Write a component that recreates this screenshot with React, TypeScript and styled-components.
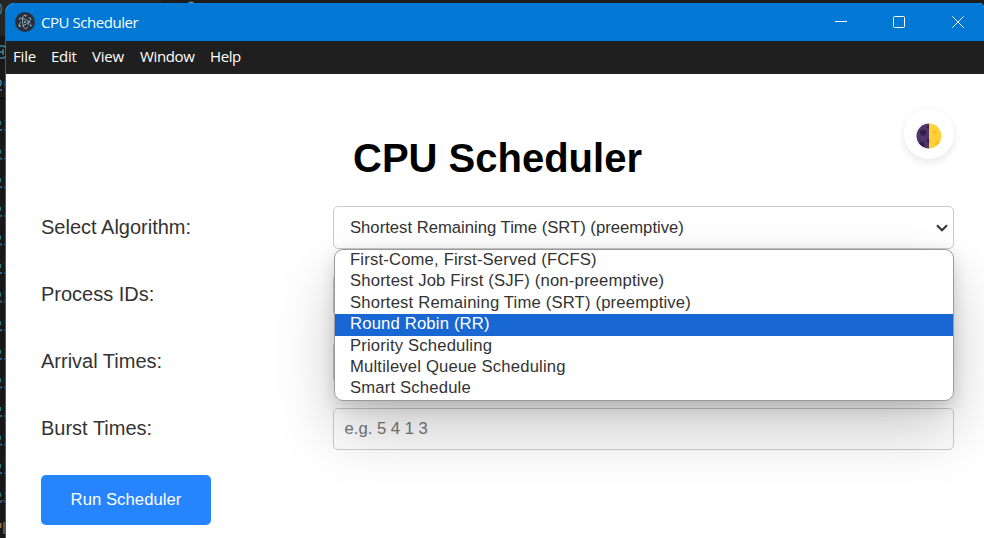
import React from "react";
import styled, { createGlobalStyle } from "styled-components";

const GlobalStyle = createGlobalStyle`
  * { box-sizing: border-box; }
  html, body { margin: 0; padding: 0; background: #171717; overflow: hidden; }
`;

const Desktop = styled.div`
  display: flex;
  width: 984px;
  height: 538px;
  overflow: hidden;
  position: relative;
  background: #1d1d1d;
  font-family: "Liberation Sans", Arial, sans-serif;
`;

const EditorBehind = styled.svg`
  position: absolute;
  left: 0;
  top: 0;
`;

const Window = styled.div`
  position: relative;
  display: flex;
  flex-direction: column;
  width: 979px;
  height: 535px;
  margin: 3px 0 0 5px;
  border-left: 1px solid #0b6cc0;
  border-radius: 9px 5px 0 0;
  overflow: hidden;
  background: #fff;
`;

const TitleBar = styled.header`
  display: flex;
  align-items: center;
  flex: none;
  height: 38px;
  padding-left: 9px;
  background: #0078d4;
  color: #fff;
  font-family: "Open Sans", sans-serif;
`;

const WindowTitle = styled.span`
  flex: 1;
  margin-left: 6px;
  font-size: 15px;
  line-height: 20px;
  letter-spacing: -0.45px;
`;

const Controls = styled.div`
  display: flex;
  margin-right: -3px;
`;

const Control = styled.div`
  display: flex;
  align-items: center;
  justify-content: center;
  width: 58.5px;
  height: 38px;
`;

const MenuBar = styled.nav`
  display: flex;
  flex: none;
  height: 33px;
  padding-left: 7px;
  background: #1f1f1f;
  color: #fff;
  font-family: "Open Sans", sans-serif;
`;

const MenuItem = styled.span<{ $width: number; $spacing: number }>`
  width: ${(p) => p.$width}px;
  font-size: 15px;
  line-height: 30px;
  letter-spacing: ${(p) => p.$spacing}px;
  white-space: nowrap;
`;

const Page = styled.main`
  position: relative;
  flex: 1;
  padding: 60px 30px 0 35px;
`;

const ThemeToggle = styled.button`
  position: absolute;
  top: 35px;
  right: 30px;
  display: flex;
  align-items: center;
  justify-content: center;
  width: 50px;
  height: 50px;
  padding: 3px 0 0;
  border: 0;
  border-radius: 50%;
  background: #fff;
  box-shadow: 0 3px 8px rgba(0, 0, 0, 0.1);
`;

const Heading = styled.h1`
  margin: 0 0 24px;
  font-size: 40px;
  line-height: 48px;
  font-weight: 700;
  text-align: center;
  color: #000;
`;

const Form = styled.div`
  display: grid;
  grid-template-columns: 292px 621px;
  grid-auto-rows: 43px;
  row-gap: 24px;
  align-items: center;
`;

const Label = styled.label`
  padding-bottom: 2px;
  font-size: 20px;
  line-height: 24px;
  color: #333;
`;

const SelectField = styled.div`
  position: relative;
  display: flex;
  align-items: center;
  justify-content: space-between;
  height: 43px;
  padding: 0 5px 0 16px;
  border: 1px solid #ccc;
  border-radius: 5px;
  background: #fff;
  color: #333;
  font-size: 16.67px;
`;

const TextField = styled.div`
  display: flex;
  align-items: center;
  height: 42px;
  padding: 1px 0 0 10.5px;
  border: 1px solid #ccc;
  border-radius: 5px;
  background: #fff;
  color: #757575;
  font-size: 16.67px;
`;

const OptionList = styled.ul`
  position: absolute;
  z-index: 2;
  top: 42px;
  left: 0;
  width: 620px;
  height: 152px;
  margin: 0;
  padding: 0;
  overflow: hidden;
  list-style: none;
  border: 1px solid #9a9a9a;
  border-radius: 9px;
  background: #fff;
`;

const OptionShadow = styled.div`
  position: absolute;
  z-index: 1;
  top: 42px;
  left: 0;
  width: 620px;
  height: 152px;
  border-radius: 9px;
  box-shadow: 0 30px 60px rgba(0, 0, 0, 0.21), 0 5px 16px rgba(0, 0, 0, 0.15);
`;

const Option = styled.li<{ $active?: boolean }>`
  height: 21.4px;
  padding-left: 15px;
  font-size: 16.67px;
  line-height: 20px;
  letter-spacing: 0.17px;
  white-space: nowrap;
  background: ${(p) => (p.$active ? "#1967d2" : "transparent")};
  color: ${(p) => (p.$active ? "#fff" : "#333")};
`;

const RunButton = styled.button`
  display: block;
  width: 170px;
  height: 50px;
  margin-top: 25px;
  padding: 0 0 1px;
  border: 0;
  border-radius: 5px;
  background: #2684ff;
  color: #fff;
  font-family: inherit;
  font-size: 16.67px;
  letter-spacing: 0.05px;
`;

const menus = [
  { name: "File", width: 38, spacing: -0.2 },
  { name: "Edit", width: 41, spacing: -0.3 },
  { name: "View", width: 48, spacing: -0.2 },
  { name: "Window", width: 70, spacing: -0.35 },
  { name: "Help", width: 40, spacing: -0.4 },
];

const options = [
  "First-Come, First-Served (FCFS)",
  "Shortest Job First (SJF) (non-preemptive)",
  "Shortest Remaining Time (SRT) (preemptive)",
  "Round Robin (RR)",
  "Priority Scheduling",
  "Multilevel Queue Scheduling",
  "Smart Schedule",
];

const codeLines = Array.from({ length: 20 }, (_, i) => 129 + i * 28.6).filter((y) => y < 505);

function CodeEdge() {
  return (
    <EditorBehind width="984" height="538" viewBox="0 0 984 538">
      <rect width="161" height="36" fill="#252525" />
      <rect y="36" width="6" height="502" fill="#181818" />
      <rect y="98" width="6" height="1" fill="#050505" />
      <path d="M0 4q3 5 0 10" fill="none" stroke="#3b788b" strokeWidth="1.5" />
      <circle cx="191" cy="5" r="3.500" fill="#3b9ab0" />
      <path d="M0 46h3q2 0 2 2M0 58h3q2 0 2-2M0 52h4M3 49v6" stroke="#44839a" strokeWidth="1.5" fill="none" />
      <path d="M0 80q2 2 0 6M0 90h2" stroke="#3c8495" strokeWidth="1.5" fill="none" />
      <path d="M5.500 80q-2 4 0 8" stroke="#17519a" fill="none" />
      {codeLines.map((y) => (
        <g key={y}>
          <rect y={y} width="2" height="2" fill="#276b7c" />
          <rect x="4" y={y} width="1" height="2" fill="#174d89" />
          <rect y={y - 8} width="1" height="4" fill="#27807e" />
          <rect x="4" y={y - 9} width="1" height="1" fill="#173a73" />
        </g>
      ))}
      <path d="M0 500.500h5" stroke="#444" />
      <rect y="523" width="1.500" height="5" fill="#95693e" />
      <rect x="3" y="522" width="2" height="12" fill="#555" />
    </EditorBehind>
  );
}

function ElectronIcon() {
  return (
    <svg width="20" height="20" viewBox="0 0 20 20">
      <circle cx="10" cy="10" r="10" fill="#2b2e3b" />
      <g fill="none" stroke="#a5c5ce" strokeWidth="0.8">
        <path d="M5.200 8.200C3.500 6.400 4.100 5.600 7 6.300c3.100.7 6.600 2.700 8.400 4.700" />
        <path d="M13.500 6.100c2.500-.5 3 .3 1.700 2.200-1.500 2.200-4.600 4.500-7.400 5.500" />
        <path d="M12.500 14.700c-.8 2.500-2.200 2.800-3.500.6-1.500-2.500-2-6.700-1.200-9.700.4-1.500 1-2.300 1.700-2.400" />
        <path d="M13.500 9.200c.1 1.300 0 2.600-.3 3.800M5.800 10.200c-2 2.100-2.500 3.900-1 4.300" />
      </g>
      <g fill="#a5c5ce">
        <circle cx="10" cy="10" r="0.9" />
        <circle cx="10.500" cy="3.700" r="0.900" />
        <circle cx="4.800" cy="13.900" r="0.900" />
        <circle cx="15.600" cy="13.400" r="0.900" />
      </g>
    </svg>
  );
}

function MoonIcon() {
  return (
    <svg width="26" height="26" viewBox="0 0 26 26">
      <path d="M13 .5a12.500 12.500 0 0 0 0 25z" fill="#50366b" />
      <path d="M13 .5a12.500 12.500 0 0 1 0 25z" fill="#ffd338" />
      <g fill="#351d4c">
        <circle cx="7.200" cy="9.600" r="3.100" />
        <path d="M13 2a2 2 0 0 0 0 4zM13 15.500a2.200 2.200 0 0 0 0 4.400z" />
        <path d="M3 20.500c1-2.400 5-2.400 5.700.5.300 1.500-.2 2.500-1 2.900A12 12 0 0 1 3 20.500z" />
      </g>
      <g fill="#ffbd2b">
        <circle cx="18.700" cy="9" r="2.300" />
        <path d="M13 15.500a2.200 2.200 0 0 1 0 4.400zM19 21.500c-.3-3 2.500-4.800 5-3.300a12 12 0 0 1-4.200 4.700z" />
      </g>
    </svg>
  );
}

export default function App() {
  return (
    <Desktop>
      <GlobalStyle />
      <CodeEdge />
      <Window>
        <TitleBar>
          <ElectronIcon />
          <WindowTitle>CPU Scheduler</WindowTitle>
          <Controls>
            <Control>
              <svg width="12" height="12" viewBox="0 0 12 12"><path d="M0 5.500h12" stroke="#fff" /></svg>
            </Control>
            <Control>
              <svg width="12" height="12" viewBox="0 0 12 12"><rect x=".5" y=".5" width="11" height="11" rx="1" fill="none" stroke="#fff" /></svg>
            </Control>
            <Control>
              <svg width="12" height="12" viewBox="0 0 12 12"><path d="M.3.3l11.400 11.400M11.700.3L.3 11.700" stroke="#fff" /></svg>
            </Control>
          </Controls>
        </TitleBar>
        <MenuBar>
          {menus.map((m) => (
            <MenuItem key={m.name} $width={m.width} $spacing={m.spacing}>{m.name}</MenuItem>
          ))}
        </MenuBar>
        <Page>
          <ThemeToggle aria-label="Toggle theme"><MoonIcon /></ThemeToggle>
          <Heading>CPU Scheduler</Heading>
          <Form>
            <Label>Select Algorithm:</Label>
            <SelectField>
              <span>{options[2]}</span>
              <svg width="12" height="8" viewBox="0 0 12 8"><path d="M1 1.300l5 5 5-5" fill="none" stroke="#333" strokeWidth="2" /></svg>
              <OptionShadow />
              <OptionList>
                {options.map((name) => (
                  <Option key={name} $active={name === "Round Robin (RR)"}>{name}</Option>
                ))}
              </OptionList>
            </SelectField>
            <Label>Process IDs:</Label>
            <TextField />
            <Label>Arrival Times:</Label>
            <TextField />
            <Label>Burst Times:</Label>
            <TextField>e.g. 5 4 1 3</TextField>
          </Form>
          <RunButton>Run Scheduler</RunButton>
        </Page>
      </Window>
    </Desktop>
  );
}
